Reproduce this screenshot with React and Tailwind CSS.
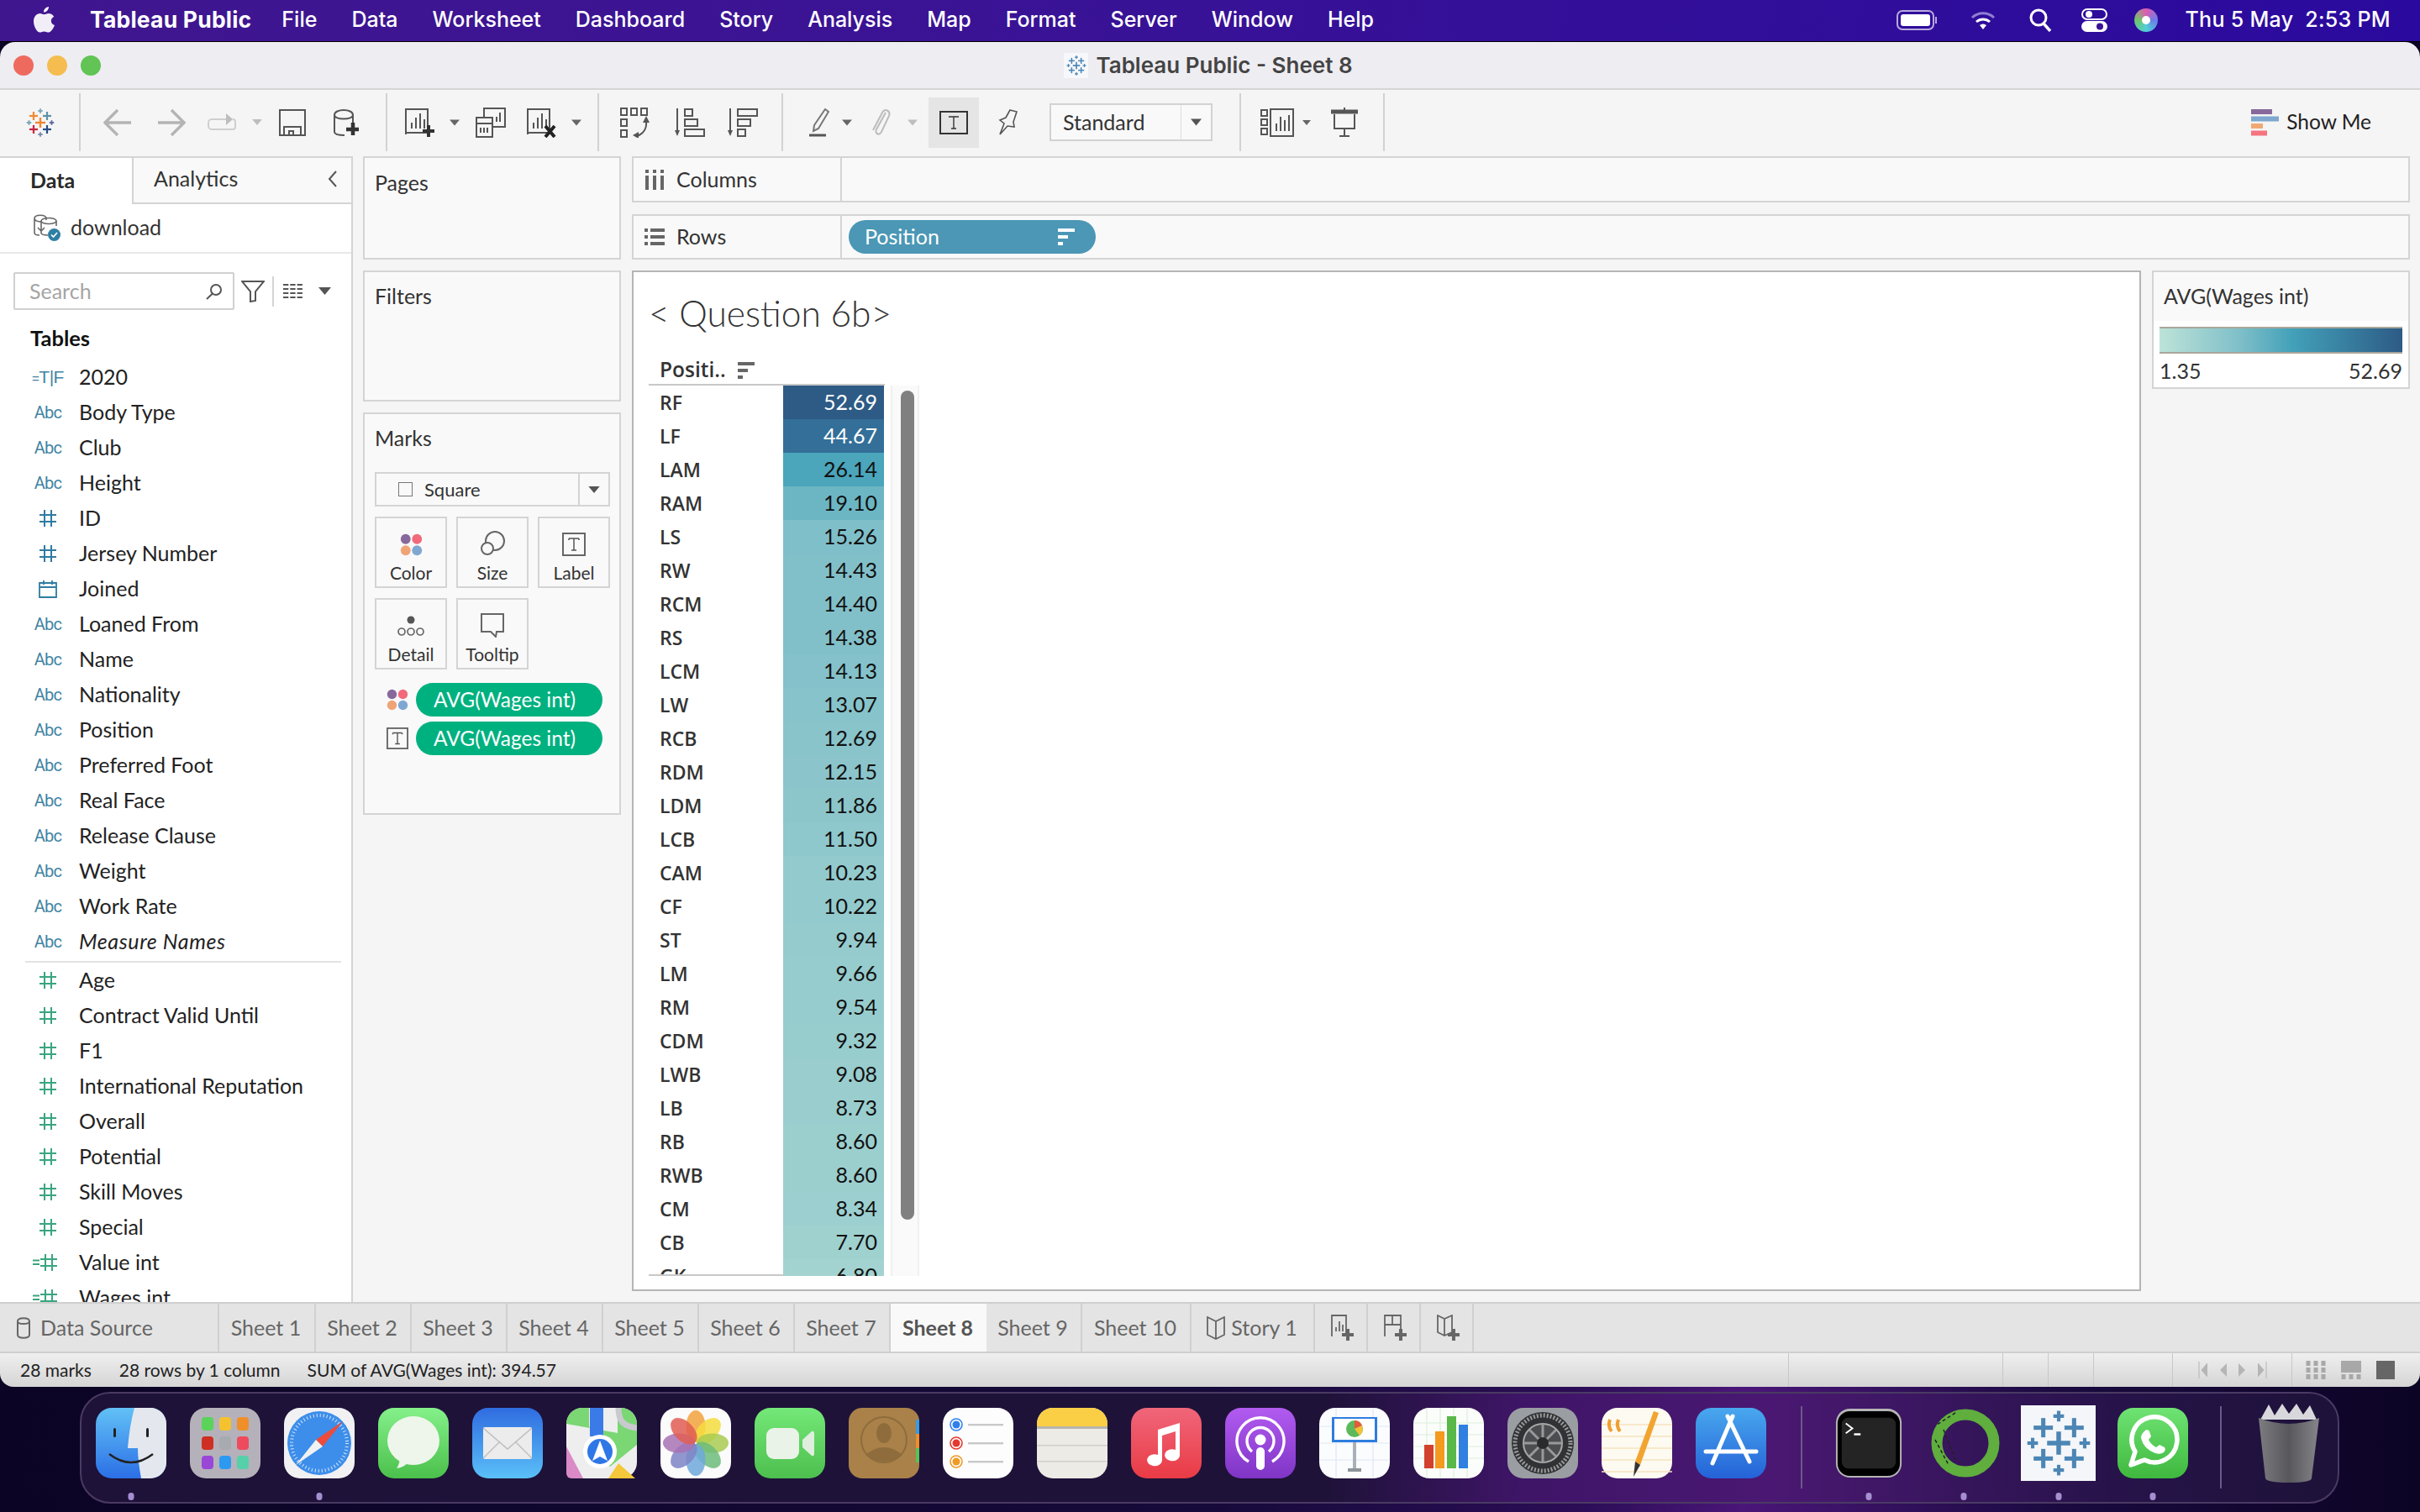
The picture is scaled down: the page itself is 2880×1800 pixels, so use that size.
import React from "react";

const FONT = "font-['Lato','Open_Sans',sans-serif]";
const MENU_FONT = "font-['Inter','Liberation_Sans',sans-serif]";

const menus = ["File", "Data", "Worksheet", "Dashboard", "Story", "Analysis", "Map", "Format", "Server", "Window", "Help"];

const dims = [
  ["calc-bool", "2020"], ["abc", "Body Type"], ["abc", "Club"], ["abc", "Height"], ["hash", "ID"],
  ["hash", "Jersey Number"], ["date", "Joined"], ["abc", "Loaned From"], ["abc", "Name"], ["abc", "Nationality"],
  ["abc", "Position"], ["abc", "Preferred Foot"], ["abc", "Real Face"], ["abc", "Release Clause"], ["abc", "Weight"],
  ["abc", "Work Rate"],
];
const measures = [
  ["green", "Age"], ["green", "Contract Valid Until"], ["green", "F1"], ["green", "International Reputation"],
  ["green", "Overall"], ["green", "Potential"], ["green", "Skill Moves"], ["green", "Special"],
  ["calc", "Value int"], ["calc", "Wages int"],
];

const rows = [
  ["RF", "52.69", "#2d5b85", 1], ["LF", "44.67", "#336f98", 1], ["LAM", "26.14", "#4ba5bb"], ["RAM", "19.10", "#6cb6c3"],
  ["LS", "15.26", "#7fbfc9"], ["RW", "14.43", "#82c0c9"], ["RCM", "14.40", "#82c0c9"], ["RS", "14.38", "#82c0c9"],
  ["LCM", "14.13", "#84c1ca"], ["LW", "13.07", "#87c3ca"], ["RCB", "12.69", "#89c4cb"], ["RDM", "12.15", "#8bc5cb"],
  ["LDM", "11.86", "#8cc6cb"], ["LCB", "11.50", "#8ec7cc"], ["CAM", "10.23", "#93cacd"], ["CF", "10.22", "#93cacd"],
  ["ST", "9.94", "#95cbcd"], ["LM", "9.66", "#96cccd"], ["RM", "9.54", "#97ccce"], ["CDM", "9.32", "#98cdce"],
  ["LWB", "9.08", "#99cdce"], ["LB", "8.73", "#9acece"], ["RB", "8.60", "#9bcfce"], ["RWB", "8.60", "#9bcfce"],
  ["CM", "8.34", "#9ccfcf"], ["CB", "7.70", "#9fd1cf"], ["GK", "6.80", "#a2d3d0"],
];

const sheets = [
  ["Sheet 1", 115], ["Sheet 2", 114], ["Sheet 3", 114], ["Sheet 4", 114], ["Sheet 5", 114], ["Sheet 6", 114], ["Sheet 7", 114],
];

const Caret = ({ w = 13, h = 8, color = "#666", className = "" }) => (
  <svg width={w} height={h} viewBox="0 0 10 6" className={`shrink-0 ${className}`}><path d="M0 0h10L5 6z" fill={color} /></svg>
);

const Sep = ({ className = "" }) => <div className={`w-[2px] h-[69px] bg-[#d2d2d2] shrink-0 ${className}`} />;

const Cross = ({ x, y, s, c, t = 2.2 }) => (
  <g fill={c}>
    <rect x={x - s / 2} y={y - t / 2} width={s} height={t} />
    <rect x={x - t / 2} y={y - s / 2} width={t} height={s} />
  </g>
);

const TableauLogo = ({ size = 34, blue = false, className = "" }) => (
  <svg width={size} height={size} viewBox="-17 -17 34 34" className={`shrink-0 ${className}`}>
    <Cross x={0} y={0} s={12} c={blue ? "#4c86b5" : "#ee8733"} t={2.4} />
    <Cross x={-8} y={-8} s={10} c={blue ? "#4c86b5" : "#ef8a35"} />
    <Cross x={8} y={-8} s={10} c={blue ? "#4c86b5" : "#5b92a8"} />
    <Cross x={-8} y={8} s={10} c={blue ? "#4c86b5" : "#c8253f"} />
    <Cross x={8} y={8} s={10} c={blue ? "#4c86b5" : "#274f86"} />
    <Cross x={0} y={-14} s={5.5} c={blue ? "#4c86b5" : "#7aa5ba"} t={1.8} />
    <Cross x={0} y={14} s={5.5} c={blue ? "#4c86b5" : "#7c89ad"} t={1.8} />
    <Cross x={-13.5} y={0} s={5.5} c={blue ? "#4c86b5" : "#6fa5b3"} t={1.8} />
    <Cross x={13.5} y={0} s={5.5} c={blue ? "#4c86b5" : "#5a66a0"} t={1.8} />
  </svg>
);

const BarSheet = ({ badge }) => (
  <svg width="38" height="36" viewBox="0 0 38 36" className="shrink-0">
    <path d="M2 32V2h26v28H2" fill="none" stroke="#555" strokeWidth="2" />
    <path d="M9 25v-7M14 25V12M19 25V7M24 25V14" stroke="#555" strokeWidth="2" />
    {badge === "plus" && <path d="M29 21v14M22 28h14" stroke="#333" strokeWidth="4" />}
    {badge === "x" && <path d="M23 22l11 13M34 22L23 35" stroke="#222" strokeWidth="4" />}
  </svg>
);

const Toolbar = () => (
  <div className="h-[79px] bg-[#f5f5f5] flex items-center pb-[2px] shrink-0">
    <TableauLogo size={34} className="ml-[31px]" />
    <Sep className="ml-[29px]" />
    <svg width="34" height="34" viewBox="0 0 34 34" className="ml-[27px] shrink-0"><path d="M33 17H3M17 2L2 17l15 15" fill="none" stroke="#b4b4b4" strokeWidth="3.4" /></svg>
    <svg width="34" height="34" viewBox="0 0 34 34" className="ml-[30px] shrink-0"><path d="M1 17h30M17 2l15 15-15 15" fill="none" stroke="#b4b4b4" strokeWidth="3.4" /></svg>
    <svg width="36" height="24" viewBox="0 0 36 24" className="ml-[25px] shrink-0"><path d="M26 8H6a4 4 0 0 0-4 4v4a4 4 0 0 0 4 4h25a3 3 0 0 0 3-3v-6a3 3 0 0 0-3-3" fill="none" stroke="#cfcfcf" strokeWidth="2" /><path d="M23 1l8 7-8 7z" fill="#bdbdbd" /></svg>
    <Caret w={12} h={7} color="#bdbdbd" className="ml-[18px]" />
    <svg width="32" height="32" viewBox="0 0 32 32" className="ml-[20px] shrink-0"><path d="M1 1h30v30H1zM6 31V21h20v10M12 31v-5h5v5" fill="none" stroke="#555" strokeWidth="2" /></svg>
    <svg width="32" height="34" viewBox="0 0 32 34" className="ml-[32px] shrink-0"><path d="M2 8c0-8 22-8 22 0v14M2 8c0 6 22 6 22 0M2 8v20c0 3 6 4 12 4" fill="none" stroke="#555" strokeWidth="2" /><path d="M24 17v15M16 25h15" stroke="#333" strokeWidth="4.5" /></svg>
    <Sep className="ml-[31px]" />
    <div className="ml-[20px] shrink-0"><BarSheet badge="plus" /></div>
    <Caret w={12} h={8} className="ml-[16px]" />
    <svg width="36" height="36" viewBox="0 0 36 36" className="ml-[19px] shrink-0"><path d="M10 12V1h25v22H20M1 12h19v23H1zM1 19h19" fill="none" stroke="#555" strokeWidth="2" /><path d="M25 17V11M29 17V6M6 30v-6M10 30v-6M14 30v-6" stroke="#555" strokeWidth="2" /></svg>
    <div className="ml-[24px] shrink-0"><BarSheet badge="x" /></div>
    <Caret w={12} h={8} className="ml-[16px]" />
    <Sep className="ml-[19px]" />
    <svg width="36" height="36" viewBox="0 0 36 36" className="ml-[25px] shrink-0"><g fill="none" stroke="#555" strokeWidth="2"><rect x="1" y="1" width="7" height="8" /><rect x="13" y="1" width="7" height="8" /><rect x="25" y="1" width="7" height="8" /><rect x="1" y="14" width="7" height="8" /><rect x="1" y="27" width="7" height="8" /><path d="M31 16c1 9-3 15-11 18" /></g><path d="M31 10l4 8h-8zM15 33l7-4v8z" fill="#555" /></svg>
    <svg width="36" height="36" viewBox="0 0 36 36" className="ml-[29px] shrink-0"><path d="M3 1v31" stroke="#555" strokeWidth="2" /><path d="M0 27h6l-3 7z" fill="#555" /><g fill="none" stroke="#555" strokeWidth="2"><rect x="12" y="2" width="9" height="8" /><rect x="12" y="14" width="15" height="8" /><rect x="12" y="26" width="23" height="8" /></g></svg>
    <svg width="36" height="36" viewBox="0 0 36 36" className="ml-[27px] shrink-0"><path d="M3 1v31" stroke="#555" strokeWidth="2" /><path d="M0 27h6l-3 7z" fill="#555" /><g fill="none" stroke="#555" strokeWidth="2"><rect x="12" y="2" width="23" height="8" /><rect x="12" y="14" width="15" height="8" /><rect x="12" y="26" width="9" height="8" /></g></svg>
    <Sep className="ml-[28px]" />
    <svg width="26" height="34" viewBox="0 0 26 34" className="ml-[29px] shrink-0"><path d="M21 1l4 3-12 20-6 3 1-7z" fill="none" stroke="#777" strokeWidth="2" /><path d="M2 32h20" stroke="#555" strokeWidth="3" /></svg>
    <Caret w={12} h={8} className="ml-[15px]" />
    <svg width="24" height="34" viewBox="0 0 24 34" className="ml-[22px] shrink-0"><path d="M18 5L7 25c-2 5 3 8 6 3l9-19c2-6-5-10-8-4L3 26" fill="none" stroke="#bcbcbc" strokeWidth="2" /></svg>
    <Caret w={12} h={8} color="#bdbdbd" className="ml-[20px]" />
    <div className="ml-[13px] w-[60px] h-[60px] bg-[#e5e5e5] flex items-center justify-center shrink-0">
      <svg width="34" height="28" viewBox="0 0 34 28"><rect x="1" y="1" width="32" height="26" fill="none" stroke="#333" strokeWidth="2" /><path d="M11 7h12M17 7v14M14 21h6" fill="none" stroke="#333" strokeWidth="1.4" /></svg>
    </div>
    <svg width="26" height="32" viewBox="0 0 26 32" className="ml-[21px] shrink-0"><path d="M16 1l8 2-4 12 1 6-8-1-9 10 5-13-5-4 7-3z" fill="none" stroke="#555" strokeWidth="1.6" /></svg>
    <div className={`ml-[37px] w-[194px] h-[45px] border-2 border-[#d2d2d2] bg-[#f9f9f9] flex items-center shrink-0 ${FONT}`}>
      <span className="flex-1 pl-[14px] text-[25px] text-[#333]">Standard</span>
      <div className="w-[36px] h-full border-l border-[#ddd] flex items-center justify-center"><Caret w={13} h={9} color="#555" /></div>
    </div>
    <Sep className="ml-[32px]" />
    <svg width="40" height="34" viewBox="0 0 40 34" className="ml-[23px] shrink-0"><g fill="none" stroke="#555" strokeWidth="2"><rect x="1" y="2" width="7" height="7" /><rect x="1" y="13" width="7" height="7" /><rect x="1" y="24" width="7" height="7" /><rect x="12" y="1" width="27" height="32" /></g><path d="M19 27v-9M24 27V10M29 27V14M34 27V8" stroke="#555" strokeWidth="2" /></svg>
    <Caret w={10} h={8} className="ml-[10px]" />
    <svg width="34" height="36" viewBox="0 0 34 36" className="ml-[23px] shrink-0"><path d="M1 5h32" stroke="#555" strokeWidth="5" /><path d="M5 8v17h24V8M17 0v4M17 25v8M11 34h12" fill="none" stroke="#555" strokeWidth="2" /></svg>
    <Sep className="ml-[29px]" />
    <div className={`ml-auto mr-[58px] flex items-center ${FONT}`}>
      <svg width="33" height="32" viewBox="0 0 33 32"><rect x="0" y="0" width="25" height="6" fill="#87699b" /><rect x="0" y="8.5" width="33" height="6" fill="#7fa7cf" /><rect x="0" y="17" width="14" height="6" fill="#f2a874" /><rect x="0" y="25.5" width="19" height="6" fill="#f67480" /></svg>
      <span className="ml-[9px] text-[24.5px] text-[#222]">Show Me</span>
    </div>
  </div>
);

const FieldIcon = ({ kind }) => {
  if (kind === "abc") return <span className="font-['Roboto'] text-[20px] text-[#3f84a3] tracking-[-0.8px]">Abc</span>;
  if (kind === "calc-bool")
    return <span className="text-[21px] text-[#3f84a3] tracking-[-0.5px] font-['Liberation_Sans']"><span className="text-[15px]">=</span>T|F</span>;
  if (kind === "date")
    return (
      <svg width="22" height="22" viewBox="0 0 22 22"><path d="M1 4h20v17H1zM1 9h20M6 1v5M16 1v5" fill="none" stroke="#2f7ca0" strokeWidth="1.8" /></svg>
    );
  const col = kind === "hash" ? "#2f7ca0" : "#3aa57f";
  const hash = (
    <svg width="20" height="22" viewBox="0 0 20 22"><path d="M6 1v20M14 1v20M0 7h20M0 15h20" stroke={col} strokeWidth="2" /></svg>
  );
  if (kind === "calc")
    return (
      <span className="flex items-center gap-[1px] -ml-[8px]">
        <svg width="8" height="8" viewBox="0 0 8 8"><path d="M0 1.5h8M0 6h8" stroke={col} strokeWidth="2" /></svg>
        {hash}
      </span>
    );
  return hash;
};

const FieldRow = ({ kind, name, italic }) => (
  <div className="h-[42px] flex items-center shrink-0">
    <div className="w-[94px] pl-[30px] pr-[10px] flex justify-center items-center shrink-0"><FieldIcon kind={kind} /></div>
    <span className={`text-[25px] text-[#222] ${italic ? "italic tracking-[0.6px]" : ""}`}>{name}</span>
  </div>
);

const Sidebar = () => (
  <div className={`w-[420px] h-full bg-white border-r-2 border-[#d4d4d4] flex flex-col overflow-hidden shrink-0 ${FONT}`}>
    <div className="flex h-[57px] shrink-0 border-t-2 border-[#d4d4d4]">
      <div className="w-[157px] pl-[36px] pt-[8px] text-[25px] font-bold text-[#2a2a2a]">Data</div>
      <div className="flex-1 flex items-center justify-between pl-[24px] pr-[16px] pb-[3px] bg-[#f9f9f9] border-l-2 border-b-2 border-[#d4d4d4] text-[25px] text-[#333]">
        <span>Analytics</span>
        <svg width="12" height="22" viewBox="0 0 12 22"><path d="M10 2L2 11l8 9" fill="none" stroke="#555" strokeWidth="2" /></svg>
      </div>
    </div>
    <div className="h-[59px] border-b-2 border-[#e8e8e8] flex items-center pl-[40px] pb-[2px] shrink-0">
      <svg width="34" height="32" viewBox="0 0 34 32" className="shrink-0">
        <g fill="none" stroke="#666" strokeWidth="1.6">
          <path d="M1 5c0-5 14-5 14 0v2M1 5v17c0 2 3 3 6 3M1 5c0 3 5 4 8 4" />
          <ellipse cx="18" cy="8" rx="9" ry="3.5" />
          <path d="M9 8v14c0 2 4 3 8 3M27 8v6M5 16l4 4 4-4" />
        </g>
        <circle cx="24.5" cy="24.5" r="7.5" fill="#2f7fa3" />
        <path d="M21 24.5l2.5 2.5 4.5-5" fill="none" stroke="#fff" strokeWidth="1.7" />
      </svg>
      <span className="ml-[10px] text-[25px] text-[#333]">download</span>
    </div>
    <div className="flex items-center mt-[22px] pl-[16px] shrink-0">
      <div className="w-[263px] h-[45px] border-2 border-[#d0d0d0] rounded-[2px] flex items-center justify-between pl-[17px] pr-[12px]">
        <span className="text-[25px] text-[#a5a5a5]">Search</span>
        <svg width="20" height="20" viewBox="0 0 20 20"><circle cx="12" cy="8" r="6" fill="none" stroke="#555" strokeWidth="2" /><path d="M8 12.5L1 19" stroke="#555" strokeWidth="2" /></svg>
      </div>
      <svg width="28" height="26" viewBox="0 0 28 26" className="ml-[8px] shrink-0"><path d="M1 1h26L17 13v11l-6 1V13z" fill="none" stroke="#555" strokeWidth="2" /></svg>
      <div className="w-[2px] h-[36px] bg-[#d4d4d4] ml-[9px]" />
      <svg width="25" height="20" viewBox="0 0 25 20" className="ml-[11px] shrink-0"><path d="M0 2h25M0 7h25M0 12h25M0 17h25" stroke="#555" strokeWidth="2" strokeDasharray="6.3 2" /></svg>
      <Caret w={15} h={9} color="#555" className="ml-[17px]" />
    </div>
    <div className="pl-[36px] mt-[18px] h-[30px] leading-[30px] text-[25.5px] font-bold text-[#111] shrink-0">Tables</div>
    <div className="mt-[11px] flex flex-col shrink-0">
      {dims.map(([k, n]) => <FieldRow key={n} kind={k} name={n} />)}
      <FieldRow kind="abc" name="Measure Names" italic />
    </div>
    <div className="ml-[30px] w-[376px] h-[2px] bg-[#e2e2e2] shrink-0 mt-[2px]" />
    <div className="mt-[0px] flex flex-col shrink-0">
      {measures.map(([k, n]) => <FieldRow key={n} kind={k} name={n} />)}
    </div>
  </div>
);

const Dots = ({ size = 32 }) => (
  <svg width={size} height={size} viewBox="0 0 32 32" className="shrink-0">
    <circle cx="8" cy="8" r="7" fill="#87699b" /><circle cx="24" cy="8" r="7" fill="#f2697c" />
    <circle cx="8" cy="24" r="7" fill="#f0a476" /><circle cx="24" cy="24" r="7" fill="#7fa7d2" />
  </svg>
);

const TBox = ({ w = 28, h = 28 }) => (
  <svg width={w} height={h} viewBox="0 0 28 28" className="shrink-0">
    <rect x="1" y="1" width="26" height="26" fill="none" stroke="#666" strokeWidth="2" />
    <path d="M8 7h12M8 7v2M20 7v2M14 7v14M11 21h6" fill="none" stroke="#555" strokeWidth="1.5" />
  </svg>
);

const MarkBtn = ({ icon, label }) => (
  <div className="h-[85px] border-2 border-[#d4d4d4] flex flex-col items-center">
    <div className="h-[45px] flex items-end justify-center">{icon}</div>
    <span className="mt-[7px] text-[21px] leading-[26px] text-[#333]">{label}</span>
  </div>
);

const Pill = () => (
  <div className="w-[222px] h-[40px] rounded-full bg-[#00b180] text-white text-[24.5px] flex items-center pl-[21px]">AVG(Wages int)</div>
);

const CardsColumn = () => (
  <div className={`w-[307px] ml-[12px] flex flex-col shrink-0 ${FONT}`}>
    <div className="h-[123px] border-2 border-[#d4d4d4] bg-[#f9f9f9] pl-[12px] pt-[14px] text-[25px] leading-[30px] text-[#333]">Pages</div>
    <div className="h-[156px] mt-[13px] border-2 border-[#d4d4d4] bg-[#f9f9f9] pl-[12px] pt-[13px] text-[25px] leading-[30px] text-[#333]">Filters</div>
    <div className="h-[479px] mt-[13px] border-2 border-[#d4d4d4] bg-[#f9f9f9] px-[12px] pt-[13px] text-[#333]">
      <div className="text-[25px] leading-[30px]">Marks</div>
      <div className="mt-[26px] w-[280px] h-[41px] border-2 border-[#d4d4d4] flex items-center">
        <div className="w-[17px] h-[17px] border border-[#777] ml-[26px]" />
        <span className="ml-[14px] text-[22px]">Square</span>
        <div className="ml-auto w-[36px] h-full border-l-2 border-[#d4d4d4] flex items-center justify-center"><Caret w={14} h={8} color="#555" /></div>
      </div>
      <div className="mt-[12px] w-[280px] grid grid-cols-3 gap-x-[11px] gap-y-[12px]">
        <MarkBtn label="Color" icon={<Dots size={27} />} />
        <MarkBtn label="Size" icon={
          <svg width="30" height="30" viewBox="0 0 30 30"><circle cx="18" cy="12" r="11" fill="none" stroke="#666" strokeWidth="2" /><circle cx="9" cy="21" r="7" fill="#f9f9f9" stroke="#666" strokeWidth="2" /></svg>
        } />
        <MarkBtn label="Label" icon={<TBox w={28} h={28} />} />
        <MarkBtn label="Detail" icon={
          <svg width="32" height="26" viewBox="0 0 32 26"><circle cx="16" cy="5" r="4.5" fill="#555" /><g fill="none" stroke="#666" strokeWidth="1.7"><circle cx="5" cy="19" r="4" /><circle cx="16" cy="19" r="4" /><circle cx="27" cy="19" r="4" /></g></svg>
        } />
        <MarkBtn label="Tooltip" icon={
          <svg width="30" height="30" viewBox="0 0 30 30"><path d="M2 2h26v21h-8l-1 6-6-6H2z" fill="none" stroke="#666" strokeWidth="2" /></svg>
        } />
      </div>
      <div className="mt-[16px] flex items-center gap-[9px] pl-[14px]"><div className="w-[26px] flex justify-center"><Dots size={26} /></div><Pill /></div>
      <div className="mt-[6px] flex items-center gap-[9px] pl-[14px]"><div className="w-[26px] flex justify-center"><TBox w={26} h={26} /></div><Pill /></div>
    </div>
  </div>
);

const SortLines = ({ color = "#666" }) => (
  <svg width="20" height="20" viewBox="0 0 20 20" className="shrink-0">
    <rect width="20" height="4" y="0" fill={color} /><rect width="12" height="4" y="8" fill={color} /><rect width="6" height="4" y="16" fill={color} />
  </svg>
);

const Shelf = ({ icon, label, h, children }) => (
  <div className={`flex ${h} shrink-0`}>
    <div className="w-[250px] border-2 border-[#d4d4d4] bg-[#f9f9f9] flex items-center pl-[13px] text-[25px] text-[#333]">
      <div className="w-[24px] flex justify-center">{icon}</div>
      <span className="ml-[14px]">{label}</span>
    </div>
    <div className="flex-1 border-2 border-l-0 border-[#d4d4d4] bg-[#f9f9f9] flex items-center pl-[8px]">{children}</div>
  </div>
);

const Viz = () => (
  <div className="w-[1796px] h-[1215px] bg-white border-2 border-[#b5b5b5] shrink-0">
    <div className="mt-[24px] ml-[18px] h-[50px] leading-[50px] text-[42.5px] font-light text-[#333]">&lt; Question 6b&gt;</div>
    <div className="mt-[26px] ml-[18px] w-[281px] h-[35px] border-b-2 border-[#c8c8c8] flex items-center pl-[13px] text-[24.5px] font-semibold text-[#333] font-['Open_Sans']">
      <span>Positi..</span>
      <div className="ml-[14px]"><SortLines /></div>
    </div>
    <div className="ml-[18px] h-[1060px] flex overflow-hidden">
      <div className="w-[280px] relative shrink-0">
        {rows.map(([pos, val, color, light]) => (
          <div key={pos} className="h-[40px] flex">
            <div className="w-[160px] pl-[13px] flex items-center text-[23px] font-semibold text-[#333] bg-white font-['Open_Sans']">{pos}</div>
            <div
              className={`w-[120px] pr-[8px] flex items-center justify-end text-[25px] ${light ? "text-white" : "text-[#111]"}`}
              style={{ backgroundColor: color }}
            >
              {val}
            </div>
          </div>
        ))}
        <div className="absolute left-0 bottom-0 w-[160px] h-[2px] bg-[#c8c8c8]" />
      </div>
      <div className="ml-[8px] w-[34px] border-x-2 border-[#f0f0f0] bg-[#fafafa] shrink-0 pt-[6px] pl-[10px]">
        <div className="w-[16px] h-[987px] rounded-full bg-[#808080]" />
      </div>
    </div>
  </div>
);

const Legend = () => (
  <div className="w-[307px] h-[141px] border-2 border-[#d4d4d4] bg-white shrink-0">
    <div className="h-[58px] bg-[#f9f9f9] pl-[12px] pt-[13px] text-[25px] leading-[30px] text-[#333]">AVG(Wages int)</div>
    <div className="mx-[7px] mt-[7px] h-[32px] border-y-2 border-[#a9a69b] bg-[linear-gradient(to_right,#bde3d8,#7fbfc9_33%,#42a0b9_55%,#2d5b85)]" />
    <div className="mx-[7px] mt-[5px] flex justify-between text-[25px] leading-[30px] text-[#333]"><span>1.35</span><span>52.69</span></div>
  </div>
);

const Main = () => (
  <div className="flex-1 flex bg-[#f5f5f5] min-h-0 overflow-hidden">
    <Sidebar />
    <CardsColumn />
    <div className={`w-[2116px] ml-[13px] flex flex-col shrink-0 ${FONT}`}>
      <Shelf h="h-[55px]" label="Columns" icon={
        <svg width="22" height="24" viewBox="0 0 22 24"><g fill="#666"><rect x="0" y="0" width="4" height="4" /><rect x="9" y="0" width="4" height="4" /><rect x="18" y="0" width="4" height="4" /><rect x="0" y="7" width="4" height="17" /><rect x="9" y="7" width="4" height="17" /><rect x="18" y="7" width="4" height="17" /></g></svg>
      } />
      <div className="h-[14px] shrink-0" />
      <Shelf h="h-[54px]" label="Rows" icon={
        <svg width="24" height="20" viewBox="0 0 24 20"><g fill="#666"><rect x="0" y="0" width="4" height="4" /><rect x="0" y="8" width="4" height="4" /><rect x="0" y="16" width="4" height="4" /><rect x="7" y="0" width="17" height="4" /><rect x="7" y="8" width="17" height="4" /><rect x="7" y="16" width="17" height="4" /></g></svg>
      }>
        <div className="w-[294px] h-[40px] rounded-full bg-[#4b97b5] text-white text-[25px] flex items-center justify-between pl-[19px] pr-[25px]">
          <span>Position</span>
          <SortLines color="#ffffff" />
        </div>
      </Shelf>
      <div className="mt-[13px] flex gap-[13px]">
        <Viz />
        <Legend />
      </div>
    </div>
  </div>
);

const SheetIcon = ({ kind }) => (
  <svg width="30" height="32" viewBox="0 0 30 32" className="ml-[5px]">
    {kind === "sheet" && <path d="M2 26V1h17v22M7 20v-5M11 20V8M15 20v-8" fill="none" stroke="#666" strokeWidth="1.8" />}
    {kind === "dash" && <path d="M2 26V1h19v22M2 12h19M11 1v11" fill="none" stroke="#666" strokeWidth="1.8" />}
    {kind === "story" && <path d="M2 1l8 4 9-4v20l-9 4-8-4zM10 5v20" fill="none" stroke="#666" strokeWidth="1.8" />}
    <path d="M21 17v14M14 24h14" stroke="#666" strokeWidth="4" />
  </svg>
);

const TabStrip = () => (
  <div className={`h-[61px] bg-[#e4e4e4] border-t-2 border-b-2 border-[#cfcfcf] flex shrink-0 text-[25px] text-[#666] ${FONT}`}>
    <div className="w-[261px] border-r-2 border-[#d0d0d0] flex items-center pl-[19px]">
      <svg width="18" height="26" viewBox="0 0 18 26"><path d="M2 5c0-5 14-5 14 0v16c0 5-14 5-14 0zM2 5c0 4 14 4 14 0" fill="none" stroke="#666" strokeWidth="2" /></svg>
      <span className="ml-[11px]">Data Source</span>
    </div>
    {sheets.map(([n, w]) => (
      <div key={n} style={{ width: w }} className="border-r-2 border-[#d0d0d0] flex items-center justify-center pr-[2px] shrink-0">{n}</div>
    ))}
    <div className="w-[114px] bg-[#f9f9f9] font-bold text-[#555] flex items-center justify-center pr-[2px] shrink-0">Sheet 8</div>
    <div className="w-[114px] border-r-2 border-[#d0d0d0] flex items-center justify-center pr-[2px] shrink-0">Sheet 9</div>
    <div className="w-[130px] border-r-2 border-[#d0d0d0] flex items-center justify-center pr-[2px] shrink-0">Sheet 10</div>
    <div className="w-[147px] border-r-2 border-[#d0d0d0] flex items-center justify-center pr-[2px] shrink-0">
      <svg width="24" height="28" viewBox="0 0 24 28"><path d="M2 1l10 5 10-5v21l-10 5-10-5zM12 6v21" fill="none" stroke="#666" strokeWidth="1.8" /></svg>
      <span className="ml-[6px]">Story 1</span>
    </div>
    {["sheet", "dash", "story"].map((k) => (
      <div key={k} className="w-[63px] border-r-2 border-[#d0d0d0] flex items-center justify-center shrink-0"><SheetIcon kind={k} /></div>
    ))}
  </div>
);

const StatusBar = () => (
  <div className={`h-[40px] bg-[linear-gradient(to_bottom,#efefef,#d5d5d5)] flex items-center shrink-0 text-[21px] text-[#222] rounded-b-[16px] relative ${FONT}`}>
    <span className="ml-[24px]">28 marks</span>
    <span className="ml-[33px]">28 rows by 1 column</span>
    <span className="ml-[32px]">SUM of AVG(Wages int): 394.57</span>
    <div className="ml-auto flex h-full shrink-0">
      <div className="w-[255px] border-l border-[#c8c8c8]" />
      <div className="w-[54px] border-l border-[#c8c8c8]" />
      <div className="w-[54px] border-l border-[#c8c8c8]" />
      <div className="w-[94px] border-l border-[#c8c8c8]" />
      <div className="w-[142px] border-l border-[#c8c8c8] flex items-center justify-center gap-[14px]">
        <svg width="12" height="20" viewBox="0 0 12 20"><path d="M2 0v20M12 2L5 10l7 8z" fill="#b5b5b5" stroke="#b5b5b5" strokeWidth="1" /></svg>
        <svg width="9" height="20" viewBox="0 0 9 20"><path d="M9 2L1 10l8 8z" fill="#b5b5b5" /></svg>
        <svg width="9" height="20" viewBox="0 0 9 20"><path d="M0 2l8 8-8 8z" fill="#b5b5b5" /></svg>
        <svg width="12" height="20" viewBox="0 0 12 20"><path d="M10 0v20M0 2l7 8-7 8z" fill="#b5b5b5" stroke="#b5b5b5" strokeWidth="1" /></svg>
      </div>
      <div className="w-[153px] border-l border-[#c8c8c8] flex items-center pl-[16px] gap-[18px]">
        <svg width="24" height="22" viewBox="0 0 24 22" className="shrink-0"><path d="M3 0v6M3 8v6M3 16v6M12 0v6M12 8v6M12 16v6M21 0v6M21 8v6M21 16v6" stroke="#a8a8a8" strokeWidth="5" /></svg>
        <svg width="24" height="22" viewBox="0 0 24 22" className="shrink-0"><rect width="24" height="14" fill="#a8a8a8" /><path d="M3 16v6M12 16v6M21 16v6" stroke="#a8a8a8" strokeWidth="5" /></svg>
        <div className="w-[22px] h-[22px] bg-[#666] shrink-0" />
      </div>
    </div>
  </div>
);

const Tile = ({ children }) => (
  <svg width="84" height="84" viewBox="0 0 84 84" className="block">{children}</svg>
);

const Finder = () => (
  <Tile>
    <defs><linearGradient id="fd" x1="0" y1="0" x2="0" y2="1"><stop offset="0" stopColor="#62c1f6" /><stop offset="1" stopColor="#2b6fe6" /></linearGradient></defs>
    <rect width="84" height="84" rx="19" fill="url(#fd)" />
    <path d="M46 0h19a19 19 0 0 1 19 19v46a19 19 0 0 1-19 19H54q-4-22-4-36H38q2-26 8-48" fill="#e4e8ee" />
    <rect x="21" y="24" width="3" height="11" rx="1.5" fill="#222" /><rect x="60" y="24" width="3" height="11" rx="1.5" fill="#222" />
    <path d="M16 55q26 20 52 0" fill="none" stroke="#222" strokeWidth="2.4" />
  </Tile>
);

const Launchpad = () => {
  const c = ["#5ad35a", "#f4c22f", "#ee8f2a", "#cf2f22", "#a7abb0", "#ee4b5e", "#9a47d8", "#2d9af1", "#55d0a8"];
  return (
    <div className="w-[84px] h-[84px] rounded-[19px] bg-[#b4b1ba] grid grid-cols-3 gap-[7px] px-[14px] py-[11px]">
      {c.map((col) => <div key={col} style={{ backgroundColor: col }} className="rounded-[4px]" />)}
    </div>
  );
};

const Safari = () => (
  <Tile>
    <rect width="84" height="84" rx="19" fill="#f1f1f3" />
    <circle cx="42" cy="42" r="38" fill="#3d8eea" />
    <circle cx="42" cy="42" r="33" fill="none" stroke="#d5e6fa" strokeWidth="4" strokeDasharray="1 3" />
    <path d="M70 16L46 46 38 38z" fill="#ee4b3c" />
    <path d="M14 68l24-30 8 8z" fill="#f1f1f1" />
  </Tile>
);

const Messages = () => (
  <Tile>
    <defs><linearGradient id="ms" x1="0" y1="0" x2="0" y2="1"><stop offset="0" stopColor="#84f08a" /><stop offset="1" stopColor="#4bc04b" /></linearGradient></defs>
    <rect width="84" height="84" rx="19" fill="url(#ms)" />
    <ellipse cx="42" cy="39" rx="31" ry="29" fill="#eef6ec" />
    <path d="M26 60q-1 8-4 12 8-1 14-7z" fill="#eef6ec" />
  </Tile>
);

const Mail = () => (
  <Tile>
    <defs><linearGradient id="ml" x1="0" y1="0" x2="0" y2="1"><stop offset="0" stopColor="#2f6ce0" /><stop offset="1" stopColor="#5ac0f8" /></linearGradient></defs>
    <rect width="84" height="84" rx="19" fill="url(#ml)" />
    <rect x="13" y="23" width="58" height="38" rx="2" fill="#ececec" />
    <path d="M13 24l29 25 29-25M13 60l20-20M71 60L51 40" fill="none" stroke="#bdbdbd" strokeWidth="1.4" />
  </Tile>
);

const Maps = () => (
  <Tile>
    <rect width="84" height="84" rx="19" fill="#eeeeee" />
    <path d="M0 19a19 19 0 0 1 19-19h8v22L52 70 84 44V19a19 19 0 0 0-19-19h-4v30z" fill="#73d56d" opacity="0.95" />
    <rect x="28" y="0" width="16" height="34" fill="#3b7be8" />
    <path d="M62 0c0 16 6 22 22 24" fill="none" stroke="#c9c9cf" strokeWidth="7" />
    <path d="M0 46l20 38H6a6 6 0 0 1-6-6z" fill="#d98ac7" />
    <path d="M50 84l12-18 20 18z" fill="#f5c73a" />
    <circle cx="40" cy="52" r="20" fill="#ffffff" />
    <circle cx="40" cy="52" r="15" fill="#2f77e6" />
    <path d="M40 39l9 24-9-5-9 5z" fill="#fff" />
  </Tile>
);

const Photos = () => {
  const c = ["#f2a23c", "#f4dc3e", "#a8cb50", "#6dbb7a", "#6fa8dc", "#7f84c6", "#a872b4", "#e05d52"];
  return (
    <Tile>
      <rect width="84" height="84" rx="19" fill="#fbfbfb" />
      {c.map((col, i) => (
        <ellipse key={col} cx="42" cy="22" rx="11.5" ry="19" fill={col} opacity="0.85" transform={`rotate(${i * 45} 42 42)`} />
      ))}
    </Tile>
  );
};

const FaceTime = () => (
  <Tile>
    <defs><linearGradient id="ft" x1="0" y1="0" x2="0" y2="1"><stop offset="0" stopColor="#74e878" /><stop offset="1" stopColor="#4cbf4e" /></linearGradient></defs>
    <rect width="84" height="84" rx="19" fill="url(#ft)" />
    <rect x="14" y="24" width="39" height="37" rx="9" fill="#eaf3e7" />
    <path d="M57 38l11-10q3-1 3 3v23q0 4-3 3L57 47z" fill="#dfeede" />
  </Tile>
);

const Contacts = () => (
  <Tile>
    <rect width="84" height="84" rx="16" fill="#a98149" />
    <circle cx="42" cy="38" r="27" fill="none" stroke="#8e6c3c" strokeWidth="2" />
    <ellipse cx="42" cy="30" rx="9" ry="12" fill="#8e6c3c" />
    <path d="M20 56q22-18 44 0-22 16-44 0" fill="#8e6c3c" />
    <rect x="80" y="14" width="4" height="17" fill="#3a9be0" /><rect x="80" y="31" width="4" height="17" fill="#ee8f2a" /><rect x="80" y="48" width="4" height="17" fill="#5ac05a" />
  </Tile>
);

const Reminders = () => (
  <Tile>
    <rect width="84" height="84" rx="19" fill="#fdfdfd" />
    {[["#2f80ed", 20], ["#e5392f", 42], ["#ef9a25", 64]].map(([col, y]) => (
      <g key={col}>
        <circle cx="16" cy={y} r="7" fill="none" stroke={col} strokeWidth="1.6" />
        <circle cx="16" cy={y} r="4.5" fill={col} />
        <rect x="30" y={y - 1} width="42" height="2.4" fill="#c8c8c8" />
      </g>
    ))}
  </Tile>
);

const Notes = () => (
  <Tile>
    <rect width="84" height="84" rx="19" fill="#ecebe6" />
    <path d="M0 22V19A19 19 0 0 1 19 0h46a19 19 0 0 1 19 19v3z" fill="#fbcf45" />
    <rect y="22" width="84" height="3" fill="#b8b6ae" />
    <rect y="44" width="84" height="1.5" fill="#d0cfc9" /><rect y="63" width="84" height="1.5" fill="#d0cfc9" />
  </Tile>
);

const Music = () => (
  <Tile>
    <defs><linearGradient id="mu" x1="0" y1="0" x2="0" y2="1"><stop offset="0" stopColor="#f0667a" /><stop offset="1" stopColor="#e93b45" /></linearGradient></defs>
    <rect width="84" height="84" rx="19" fill="url(#mu)" />
    <path d="M32 26l26-8v38a9 7 0 1 1-5-6V28l-16 5v29a9 7 0 1 1-5-6z" fill="#fff" />
  </Tile>
);

const Podcasts = () => (
  <Tile>
    <defs><linearGradient id="po" x1="0" y1="0" x2="0" y2="1"><stop offset="0" stopColor="#b25bf0" /><stop offset="1" stopColor="#7f35c6" /></linearGradient></defs>
    <rect width="84" height="84" rx="19" fill="url(#po)" />
    <g fill="none" stroke="#fff" strokeWidth="3.4"><path d="M28 64a28 28 0 1 1 28 0" /><path d="M32 52a16 16 0 1 1 20 0" /></g>
    <circle cx="42" cy="38" r="6.5" fill="#fff" /><rect x="37" y="47" width="10" height="27" rx="5" fill="#fff" />
  </Tile>
);

const Keynote = () => (
  <Tile>
    <rect width="84" height="84" rx="19" fill="#fbfcfe" />
    <path d="M0 22h84M0 42h84M0 62h84M20 0v84M64 0v84" stroke="#dfe7f4" strokeWidth="1.2" />
    <rect x="40" y="40" width="4" height="34" fill="#a9b0b8" />
    <rect x="34" y="72" width="16" height="4" fill="#8d949c" />
    <rect x="15" y="11" width="54" height="30" fill="#2d7de0" />
    <rect x="18" y="13" width="48" height="25" fill="#fff" />
    <circle cx="42" cy="25" r="10" fill="#5cb95c" />
    <path d="M42 25V15a10 10 0 0 1 9 6z" fill="#e55a3c" /><path d="M42 25l9-4a10 10 0 0 1-3 12z" fill="#f2c23a" />
  </Tile>
);

const Numbers = () => (
  <Tile>
    <rect width="84" height="84" rx="19" fill="#fbfdfb" />
    <path d="M0 18h84M0 32h84M0 46h84M0 60h84M16 0v84M32 0v84M48 0v84M64 0v84" stroke="#dcefdc" strokeWidth="1.2" />
    <rect x="13" y="44" width="11" height="28" fill="#d2402e" />
    <rect x="26" y="28" width="11" height="44" fill="#f39a1f" />
    <rect x="40" y="10" width="11" height="62" fill="#58b848" />
    <rect x="54" y="20" width="11" height="52" fill="#2f80e0" />
  </Tile>
);

const Settings = () => (
  <Tile>
    <rect width="84" height="84" rx="19" fill="#9a9ea2" />
    <circle cx="42" cy="42" r="37" fill="#303235" />
    <circle cx="42" cy="42" r="33" fill="none" stroke="#9a9a9a" strokeWidth="5" strokeDasharray="2 2" />
    <circle cx="42" cy="42" r="23" fill="#4b4d50" stroke="#a8a8a8" strokeWidth="2" />
    <path d="M42 19v46M19 42h46M26 26l32 32M58 26L26 58" stroke="#999" strokeWidth="3" />
    <circle cx="42" cy="42" r="7" fill="#2b2b2d" />
  </Tile>
);

const Pages = () => (
  <Tile>
    <rect width="84" height="84" rx="19" fill="#fdfaf2" />
    <path d="M0 20h84M0 34h84M0 48h84M0 62h84M0 76h84" stroke="#f6e3bd" strokeWidth="1.4" />
    <path d="M10 14q-3 8 2 14M20 14q-3 8 2 14" fill="none" stroke="#ef9f31" strokeWidth="4" />
    <path d="M62 4l6 2-22 62-6 4 0-8z" fill="#f2a431" />
    <path d="M40 64l6 4-8 14z" fill="#333" />
  </Tile>
);

const AppStore = () => (
  <Tile>
    <defs><linearGradient id="as" x1="0" y1="0" x2="0" y2="1"><stop offset="0" stopColor="#49a8ee" /><stop offset="1" stopColor="#2462d8" /></linearGradient></defs>
    <rect width="84" height="84" rx="19" fill="url(#as)" />
    <path d="M44 10L20 66M38 10l26 54M12 52h60" fill="none" stroke="#fff" strokeWidth="5" strokeLinecap="round" />
  </Tile>
);

const Terminal = () => (
  <Tile>
    <rect width="80" height="84" x="2" rx="17" fill="#b5b5b7" />
    <rect x="4" y="3" width="76" height="79" rx="15" fill="#000" />
    <rect x="9" y="11" width="66" height="62" rx="8" fill="#242424" />
    <path d="M14 18l8 6-8 6" fill="none" stroke="#fff" strokeWidth="2" />
    <rect x="24" y="30" width="8" height="2.5" fill="#fff" />
  </Tile>
);

const Ring = () => (
  <svg width="88" height="92" viewBox="0 0 88 92" className="block">
    <circle cx="46" cy="46" r="34" fill="none" stroke="#5fae3e" strokeWidth="13" />
    <path d="M34 10l-22 14M10 42l16 30M20 30l14 36" fill="none" stroke="#222" strokeWidth="1.5" strokeDasharray="4 3" />
  </svg>
);

const TableauApp = () => (
  <div className="w-[89px] h-[90px] bg-[#f4f6f9] flex items-center justify-center">
    <TableauLogo size={78} blue />
  </div>
);

const WhatsApp = () => (
  <Tile>
    <defs><linearGradient id="wa" x1="0" y1="0" x2="0" y2="1"><stop offset="0" stopColor="#6fe373" /><stop offset="1" stopColor="#3fb83f" /></linearGradient></defs>
    <rect width="84" height="84" rx="19" fill="url(#wa)" />
    <path d="M16 68l5-16a27 27 0 1 1 11 10z" fill="none" stroke="#fff" strokeWidth="5.5" strokeLinejoin="round" />
    <path d="M32 28q3-4 6 0l2 6-3 4q3 6 9 9l4-3 6 3q2 3-1 6-4 3-10 1-14-5-17-18 0-5 4-8" fill="#fff" />
  </Tile>
);

const Trash = () => (
  <svg width="76" height="96" viewBox="0 0 76 96" className="block">
    <defs><linearGradient id="tr" x1="0" y1="0" x2="1" y2="0"><stop offset="0" stopColor="#7c7c80" /><stop offset="0.5" stopColor="#57575c" /><stop offset="1" stopColor="#85858a" /></linearGradient></defs>
    <path d="M14 2l7 13 9-14 8 12 9-12 8 13 8-11 8 17H4z" fill="#d8d8dc" />
    <path d="M2 18q36 14 72 0l-9 72q-1 5-27 5T10 90z" fill="url(#tr)" />
  </svg>
);

const dockLeft = [
  [Finder, 1], [Launchpad], [Safari, 1], [Messages], [Mail], [Maps], [Photos], [FaceTime], [Contacts],
  [Reminders], [Notes], [Music], [Podcasts], [Keynote], [Numbers], [Settings], [Pages], [AppStore],
];

const DockItem = ({ Icon, dot, w = "w-[84px]" }) => (
  <div className={`relative ${w} flex justify-center items-center h-[84px] shrink-0`}>
    <Icon />
    {dot && <div className="absolute left-1/2 -translate-x-1/2 top-[101px] w-[7px] h-[9px] rounded-full bg-[#a58fd0]" />}
  </div>
);

const Dock = () => (
  <div className="ml-[95px] mt-[6px] w-[2689px] h-[133px] rounded-[36px] border-2 border-[#4a3a63] bg-[linear-gradient(to_right,#1e1238,#1e1238_55%,#3f1568_64%,#4a1872_75%,#27134a_90%,#1d1238)] flex items-start pl-[17px] pt-[17px]">
    <div className="flex gap-[28px]">
      {dockLeft.map(([Icon, dot], i) => <DockItem key={i} Icon={Icon} dot={dot} />)}
    </div>
    <div className="ml-[41px] w-[2px] h-[98px] -mt-[2px] bg-[#6b5a86] shrink-0" />
    <div className="ml-[38px] flex">
      <DockItem Icon={Terminal} dot w="w-[82px]" />
      <DockItem Icon={Ring} dot w="w-[88px] ml-[28px]" />
      <DockItem Icon={TableauApp} dot w="w-[89px] ml-[24px]" />
      <DockItem Icon={WhatsApp} dot w="w-[84px] ml-[26px]" />
    </div>
    <div className="ml-[38px] w-[2px] h-[98px] -mt-[2px] bg-[#6b5a86] shrink-0" />
    <div className="ml-[42px]"><DockItem Icon={Trash} w="w-[76px]" /></div>
  </div>
);

const MenuBar = () => (
  <div className={`h-[50px] shrink-0 bg-[linear-gradient(to_right,#40168f,#3a1395_40%,#2a0a9e)] border-b border-black flex items-center pb-[2px] text-white text-[25px] ${MENU_FONT}`}>
    <svg width="26" height="31" viewBox="0 0 26 31" className="ml-[40px] shrink-0">
      <path d="M18 0c.3 3-2.600 6.800-6 6.600C11.600 3.300 14.800.300 18 0zM25 22c-1.500 4-4.500 8.600-7.500 8.600-1.700 0-2.900-1.100-5-1.100s-3.300 1.100-5 1.100C4 30.600 0 23.500 0 17.500 0 11.700 3.700 8 7.600 8c2 0 3.600 1.300 4.900 1.300S15.400 8 17.800 8c1.900 0 4.800.9 6.400 3.700-4.900 2.800-4.200 8.700.8 10.300z" fill="#f2eef8" />
    </svg>
    <span className="ml-[41px] font-bold text-[26.5px] tracking-[0.2px]">Tableau Public</span>
    <div className="ml-[36px] flex gap-[41px]">
      {menus.map((m) => <span key={m} className="font-medium">{m}</span>)}
    </div>
    <div className="ml-auto flex items-center pr-[35px]">
      <svg width="48" height="24" viewBox="0 0 48 24" className="shrink-0"><rect x="1" y="1" width="43" height="22" rx="6" fill="none" stroke="#b9a9dd" strokeWidth="2" /><rect x="5" y="5" width="35" height="14" rx="3" fill="#fff" /><rect x="46" y="8" width="2" height="8" fill="#b9a9dd" /></svg>
      <svg width="30" height="24" viewBox="0 0 30 24" className="ml-[40px] shrink-0"><path d="M2 9a19 19 0 0 1 26 0" fill="none" stroke="#8f7fd0" strokeWidth="3" /><path d="M7 14a12 12 0 0 1 16 0" fill="none" stroke="#fff" strokeWidth="3" /><path d="M11 18a6 6 0 0 1 8 0l-4 5z" fill="#fff" /></svg>
      <svg width="27" height="28" viewBox="0 0 27 28" className="ml-[40px] shrink-0"><circle cx="11" cy="11" r="9" fill="none" stroke="#fff" strokeWidth="3" /><path d="M17 18l8 9" stroke="#fff" strokeWidth="3.4" /></svg>
      <svg width="31" height="28" viewBox="0 0 31 28" className="ml-[35px] shrink-0"><rect x="1" y="1" width="29" height="12" rx="6" fill="none" stroke="#fff" strokeWidth="2" /><circle cx="9" cy="7" r="4" fill="#fff" /><rect x="0" y="15" width="31" height="13" rx="6.500" fill="#fff" /><circle cx="22" cy="21.500" r="4" fill="#3a1395" /></svg>
      <div className="ml-[32px] w-[28px] h-[28px] rounded-full bg-[conic-gradient(#e05bb0,#6b7de8,#4fd0d8,#6fc36a,#e05bb0)] shrink-0 flex items-center justify-center"><div className="w-[10px] h-[10px] rounded-full bg-white" /></div>
      <span className="ml-[32px] font-medium tracking-[0.3px]">Thu 5 May&nbsp;&nbsp;2:53 PM</span>
    </div>
  </div>
);

const TitleBar = () => (
  <div className="h-[57px] bg-[#eeedf2] rounded-t-[18px] border-b-2 border-[#d5d5d5] relative flex items-center justify-center shrink-0">
    <div className="absolute left-[16px] top-[16px] flex gap-[16px]">
      <div className="w-[24px] h-[24px] rounded-full bg-[#ee6a5f]" />
      <div className="w-[24px] h-[24px] rounded-full bg-[#f5bd4f]" />
      <div className="w-[24px] h-[24px] rounded-full bg-[#61c454]" />
    </div>
    <div className={`flex items-center ${MENU_FONT} font-semibold text-[26px] text-[#444] -ml-[4px]`}>
      <div className="w-[29px] h-[30px] bg-[#f7f8fb] flex items-center justify-center mr-[9px]"><TableauLogo size={24} blue /></div>
      Tableau Public - Sheet 8
    </div>
  </div>
);

export default function App() {
  return (
    <div className="w-[2880px] h-[1800px] overflow-hidden flex flex-col bg-[linear-gradient(to_right,#0b0424,#160a3a_50%,#2a0d55_65%,#4a1678_72%,#1a0a40_85%,#0c0424)]">
      <MenuBar />
      <div className="h-[1601px] flex flex-col shrink-0">
        <TitleBar />
        <Toolbar />
        <Main />
        <TabStrip />
        <StatusBar />
      </div>
      <Dock />
    </div>
  );
}
